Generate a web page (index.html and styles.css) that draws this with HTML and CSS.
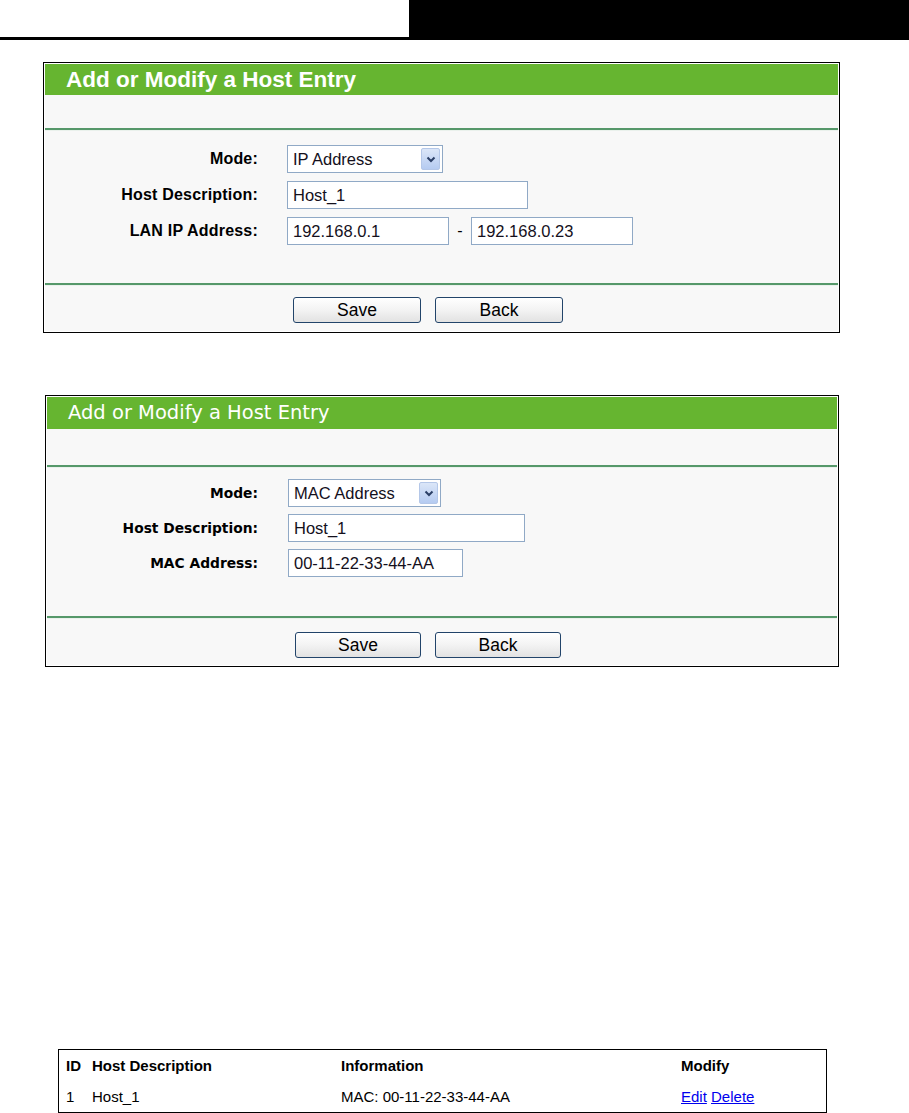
FILE: index.html
```html
<!DOCTYPE html>
<html>
<head>
<meta charset="utf-8">
<link rel="stylesheet" href="styles.css">
</head>
<body>
<div class="topbar"><div class="topbar-left"></div><div class="topbar-right"></div></div>

<div class="panel panel-ip">
  <div class="panel-head">Add or Modify a Host Entry</div>
  <div class="panel-spacer"></div>
  <div class="rule"></div>
  <div class="fields">
    <div class="row">
      <div class="label">Mode:</div>
      <div class="select sel-ip"><span class="sel-text">IP Address</span><span class="sel-arrow"><svg width="10" height="7" viewBox="0 0 10 7"><path d="M1.5 1.5 L5 5 L8.5 1.5" fill="none" stroke="#2b3f66" stroke-width="2"/></svg></span></div>
    </div>
    <div class="row">
      <div class="label">Host Description:</div>
      <div class="input in-desc">Host_1</div>
    </div>
    <div class="row">
      <div class="label">LAN IP Address:</div>
      <div class="pair"><div class="input in-ip">192.168.0.1</div><span class="dash">-</span><div class="input in-ip">192.168.0.23</div></div>
    </div>
  </div>
  <div class="rule"></div>
  <div class="buttons">
    <div class="btn">Save</div>
    <div class="btn">Back</div>
  </div>
</div>

<div class="panel panel-mac">
  <div class="panel-head">Add or Modify a Host Entry</div>
  <div class="panel-spacer"></div>
  <div class="rule"></div>
  <div class="fields">
    <div class="row">
      <div class="label">Mode:</div>
      <div class="select sel-mac"><span class="sel-text">MAC Address</span><span class="sel-arrow"><svg width="10" height="7" viewBox="0 0 10 7"><path d="M1.5 1.5 L5 5 L8.5 1.5" fill="none" stroke="#2b3f66" stroke-width="2"/></svg></span></div>
    </div>
    <div class="row">
      <div class="label">Host Description:</div>
      <div class="input in-desc2">Host_1</div>
    </div>
    <div class="row">
      <div class="label">MAC Address:</div>
      <div class="input in-mac">00-11-22-33-44-AA</div>
    </div>
  </div>
  <div class="rule"></div>
  <div class="buttons">
    <div class="btn btn2">Save</div>
    <div class="btn btn2">Back</div>
  </div>
</div>

<div class="hosts">
  <div class="hrow head">
    <div>ID</div><div>Host Description</div><div>Information</div><div>Modify</div>
  </div>
  <div class="hrow">
    <div>1</div><div>Host_1</div><div>MAC: 00-11-22-33-44-AA</div><div><a href="#">Edit</a> <a href="#">Delete</a></div>
  </div>
</div>
</body>
</html>
```
FILE: styles.css
```css
html, body { margin: 0; padding: 0; background: #fff; }
body { font-family: "Liberation Sans", Arial, sans-serif; color: #000; }

.topbar { display: flex; height: 40px; }
.topbar-left { width: 409px; height: 40px; box-sizing: border-box; border-bottom: 3px solid #000; }
.topbar-right { flex: 1; background: #000; }

.panel { box-sizing: border-box; border: 1px solid #000; padding: 1px; background: #fff; }
.panel-ip { margin: 22px 0 0 43px; width: 797px; }
.panel-mac { margin: 62px 0 0 45px; width: 794px; }

.panel-head { background: #66b530; color: #fff; padding-left: 21px; white-space: nowrap; }
.panel-ip .panel-head { height: 31px; line-height: 31px; font-weight: bold; font-size: 22.5px; }
.panel-mac .panel-head { height: 32px; line-height: 32px; font-family: "DejaVu Sans", Verdana, sans-serif; font-size: 19.5px; }

.panel-spacer { background: #f8f8f8; }
.panel-ip .panel-spacer { height: 33px; }
.panel-mac .panel-spacer { height: 36px; }

.rule { height: 2px; background: #56986a; border-bottom: 1px solid #eaf1ec; }

.fields { background: #f8f8f8; display: flex; flex-direction: column; }
.panel-ip .fields { padding: 14px 0 38px; gap: 8px; }
.panel-mac .fields { padding: 11px 0 39px; gap: 7px; }

.row { display: grid; align-items: center; }
.panel-ip .row { grid-template-columns: 213px auto; column-gap: 29px; }
.panel-mac .row { grid-template-columns: 211px auto; column-gap: 30px; }

.label { text-align: right; font-weight: bold; font-size: 16px; letter-spacing: 0.2px; white-space: nowrap; }
.panel-mac .label { font-family: "DejaVu Sans", Verdana, sans-serif; font-size: 13.8px; letter-spacing: 0; }

.input, .select { box-sizing: border-box; height: 28px; border: 1px solid #90a9c6; background: #fff; font-size: 16.5px; line-height: 26px; padding-left: 5px; color: #14101c; white-space: nowrap; }
.panel-mac .input, .panel-mac .select { font-size: 16.5px; }

.select { display: flex; justify-content: space-between; align-items: center; padding-right: 2px; }
.sel-ip { width: 156px; }
.sel-mac { width: 153px; }
.sel-arrow { width: 19px; height: 22px; box-sizing: border-box; border: 1px solid #b4c7e8; border-radius: 2px; background: linear-gradient(#dbe6f8, #b5cbf1); display: flex; align-items: center; justify-content: center; }

.in-desc { width: 241px; }
.in-desc2 { width: 237px; }
.in-ip { width: 162px; }
.in-mac { width: 175px; }
.pair { display: flex; align-items: center; }
.dash { width: 22px; text-align: center; font-size: 16px; }

.buttons { background: #f8f8f8; display: flex; gap: 14px; }
.panel-ip .buttons { padding: 11px 0 8px 248px; }
.panel-mac .buttons { padding: 13px 0 7px 248px; }
.btn { box-sizing: border-box; width: 128px; height: 26px; border: 1px solid #22446a; border-radius: 3px; background: linear-gradient(#ffffff, #f3f3f3 50%, #e2e2e2); text-align: center; line-height: 24px; font-size: 17.5px; }
.btn2 { width: 126px; }

.hosts { margin: 382px 0 0 58px; width: 769px; box-sizing: border-box; border: 1px solid #000; background: #fff; font-size: 15px; }
.hrow { display: grid; grid-template-columns: 26px 249px 340px auto; height: 31px; align-items: center; padding-left: 7px; }
.hrow.head { font-weight: bold; }
.hrow a { color: #0000ee; text-decoration: underline; }
```
